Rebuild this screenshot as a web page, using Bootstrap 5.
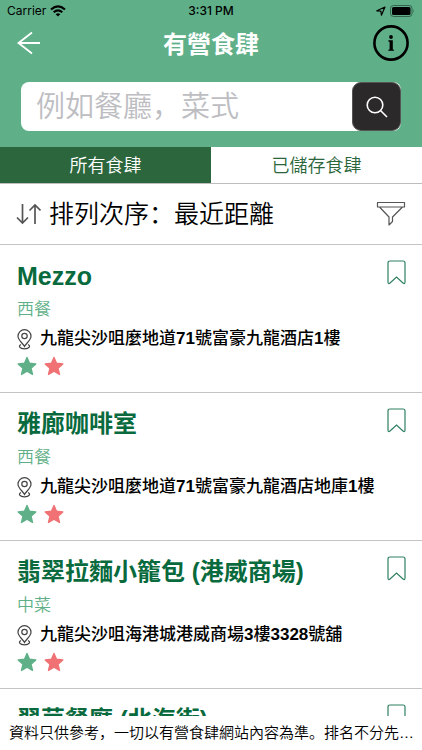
<!DOCTYPE html>
<html lang="zh">
<head>
<meta charset="utf-8">
<meta name="viewport" content="width=device-width, initial-scale=1">
<title>有營食肆</title>
<link rel="stylesheet" href="https://cdn.jsdelivr.net/npm/bootstrap@5.3.0/dist/css/bootstrap.min.css">
<style>
  body { font-family: "Liberation Sans", "Noto Sans CJK SC", sans-serif; color: #000; background: #fff; }
  svg { display: block; flex: none; }
  .top-area { background: #5fb088; }
  .status-bar { height: 22px; padding: 0 7px; font: 500 12px/22px Inter, sans-serif; }
  .status-bar > * { flex: 1 1 0; }
  .carrier { font-weight: 400; }
  .title-bar { height: 42px; padding: 0 13px; }
  .title-bar h1 { font-size: 24px; line-height: 36px; font-weight: 700; padding-top: 3px; }
  .icon-btn { padding: 0; border: 0; background: none; color: inherit; }
  .back-btn { padding: 0 4px; }
  .search-area { padding: 18px 21px 16px; }
  .search-box { height: 49px; border-radius: 8px; background: #fff; }
  .search-box input { font-size: 29px; line-height: 40px; font-weight: 350; padding: 0 0 0 15px; border: 0; background: none; min-width: 0; }
  .search-box input::placeholder { color: #bdbdc2; opacity: 1; }
  .search-btn { width: 49px; height: 49px; border: 1px solid #555; border-radius: 9px; background: #2b292a; color: #fff; }
  .tab-btn { flex: 1 1 0; height: 36px; border: 0; font-size: 18px; line-height: 36px; font-weight: 350; padding: 1px 0 0; background: #fff; color: #2c663c; }
  .tab-btn.active { background: #2c663c; color: #fff; }
  .rule-top { border-top: 1px solid #bdbdbd; }
  .sort-row { height: 61px; padding: 0 16px; }
  .sort-text { font-size: 25px; line-height: 36px; font-weight: 350; }
  .place { height: 148px; padding: 13px 16px 0 17px; border-top: 1px solid #c4c4c4; }
  .place h2 { font-size: 24px; line-height: 36px; font-weight: 700; color: #086a3d; }
  .place h2:lang(en) { font-size: 25px; }
  .cuisine { font-size: 17px; line-height: 28px; font-weight: 350; color: #5fb088; margin-top: 2px; }
  .address { font-size: 17px; line-height: 30px; font-weight: 500; gap: 8px; }
  .stars { gap: 7px; margin-top: 2px; }
  .save { color: #2f8060; margin-top: 2px; }
  .list-area { min-height: 0; }
  .note { font-size: 15px; line-height: 34px; font-weight: 350; padding: 0 9px; }
</style>
<script src="https://cdn.jsdelivr.net/npm/bootstrap@5.3.0/dist/js/bootstrap.bundle.min.js"></script>
</head>
<body class="vh-100 d-flex flex-column overflow-hidden">
<svg width="0" height="0" class="position-absolute" aria-hidden="true">
  <symbol id="bookmark" viewBox="0 0 19 25"><path d="M1 3Q1 1 3 1H16Q18 1 18 3V22Q18 24.500 16 23L9.500 17L3 23Q1 24.500 1 22Z" fill="none" stroke="currentColor" stroke-width="1.200"/></symbol>
  <symbol id="pin" viewBox="0 0 15 21"><g fill="none" stroke="#444" stroke-width="1.200"><path d="M7.500 17.500C6 14.500 1 11 1 7.200A6.500 6.500 0 0 1 14 7.200C14 11 9 14.500 7.500 17.500Z"/><circle cx="7.500" cy="7" r="2.700"/><path d="M4 15.500C1 17 2.500 19.800 7.500 19.800S14 17 11 15.500"/></g></symbol>
  <symbol id="star" viewBox="0 0 20 20"><path d="M10 1.500L12.500 7.300L18.800 7.900L14 12.100L15.500 18.400L10 15.100L4.500 18.400L6 12.100L1.200 7.900L7.500 7.300Z" fill="currentColor" stroke="currentColor" stroke-width="1.400" stroke-linejoin="round"/></symbol>
</svg>
<header class="top-area flex-shrink-0">
  <div class="status-bar d-flex align-items-center">
    <div class="carrier d-flex align-items-center gap-1">Carrier
      <svg width="16" height="12" viewBox="0 0 16 12"><g fill="none" stroke="#000" stroke-width="2.200"><path d="M1 4.500Q8-1.800 15 4.500"/><path d="M3.700 7.200Q8 3.400 12.300 7.200"/></g><path d="M5.700 9.200Q8 7.300 10.300 9.200L8 11.600Z"/></svg>
    </div>
    <div class="text-center">3:31 PM</div>
    <div class="d-flex justify-content-end align-items-center gap-1">
      <svg width="10" height="10" viewBox="0 0 10 10"><path d="M.8 4.800L9 1L5.400 9.200L4.900 5.200Z" fill="none" stroke="#000" stroke-width="1.200" stroke-linejoin="round"/></svg>
      <svg width="25" height="12" viewBox="0 0 25 12"><rect x=".5" y=".5" width="21.500" height="11" rx="3" fill="none" stroke="#35634c"/><rect x="2" y="2" width="18.500" height="8" rx="1.500"/><path d="M23.300 4Q24.700 6 23.300 8Z" fill="#35634c"/></svg>
    </div>
  </div>
  <div class="title-bar d-flex align-items-center justify-content-between text-white">
    <button class="icon-btn back-btn" type="button" aria-label="返回"><svg width="28" height="24" viewBox="0 0 28 24"><path d="M15 1.500L1.500 12L15 22.500M1.500 12H23" fill="none" stroke="#fff" stroke-width="1.800"/></svg></button>
    <h1 class="m-0">有營食肆</h1>
    <button class="icon-btn" type="button" aria-label="資訊"><svg width="36" height="36" viewBox="0 0 36 36"><circle cx="18" cy="18" r="16.600" fill="none" stroke="#000" stroke-width="2.600"/><circle cx="18" cy="12" r="1.900"/><path d="M15.300 15.300H19.800V24.300L21 25V25.800H15.200V25L16.600 24.300V17L15.300 16.300Z"/></svg></button>
  </div>
  <form class="search-area" role="search">
    <div class="search-box d-flex align-items-center">
      <input class="form-control shadow-none flex-grow-1" type="search" placeholder="例如餐廳，菜式" aria-label="搜尋食肆">
      <button class="search-btn d-flex align-items-center justify-content-center p-0 flex-shrink-0" type="button" aria-label="搜尋"><svg width="22" height="22" viewBox="0 0 22 22"><g fill="none" stroke="#fff" stroke-width="1.600"><circle cx="9" cy="9" r="7.800"/><path d="M14.500 14.500L21 21"/></g></svg></button>
    </div>
  </form>
</header>
<nav class="d-flex flex-shrink-0">
  <button class="tab-btn active" type="button">所有食肆</button>
  <button class="tab-btn" type="button">已儲存食肆</button>
</nav>
<div class="sort-row rule-top d-flex align-items-center flex-shrink-0">
  <button class="icon-btn sort-text d-flex align-items-center flex-grow-1 gap-2" type="button">
    <svg width="25" height="22" viewBox="0 0 25 22"><path d="M6.500 1V20M1 14.500L6.500 20L12 14.500M19 21V2M13.500 7.500L19 2L24.500 7.500" fill="none" stroke="#555" stroke-width="1.700"/></svg>
    排列次序：最近距離
  </button>
  <button class="icon-btn" type="button" aria-label="篩選"><svg width="30" height="26" viewBox="0 0 30 26"><path d="M1.500 1.500H28.500V6H1.500ZM3.500 6L13 16V24L16.500 20.500V16L26.500 6" fill="none" stroke="#555" stroke-width="1.200" stroke-linejoin="round"/></svg></button>
</div>
<main class="list-area flex-grow-1 overflow-hidden">
  <article class="place">
    <div class="d-flex justify-content-between align-items-start"><h2 class="m-0" lang="en">Mezzo</h2><button class="icon-btn save" type="button" aria-label="儲存 Mezzo"><svg width="19" height="25"><use href="#bookmark"/></svg></button></div>
    <div class="cuisine">西餐</div>
    <div class="address d-flex align-items-center"><svg width="15" height="21"><use href="#pin"/></svg><span>九龍尖沙咀麼地道<b>71</b>號富豪九龍酒店<b>1</b>樓</span></div>
    <div class="stars d-flex"><svg width="20" height="20" color="#5fb088"><use href="#star"/></svg><svg width="20" height="20" color="#f07274"><use href="#star"/></svg></div>
  </article>
  <article class="place">
    <div class="d-flex justify-content-between align-items-start"><h2 class="m-0">雅廊咖啡室</h2><button class="icon-btn save" type="button" aria-label="儲存 雅廊咖啡室"><svg width="19" height="25"><use href="#bookmark"/></svg></button></div>
    <div class="cuisine">西餐</div>
    <div class="address d-flex align-items-center"><svg width="15" height="21"><use href="#pin"/></svg><span>九龍尖沙咀麼地道<b>71</b>號富豪九龍酒店地庫<b>1</b>樓</span></div>
    <div class="stars d-flex"><svg width="20" height="20" color="#5fb088"><use href="#star"/></svg><svg width="20" height="20" color="#f07274"><use href="#star"/></svg></div>
  </article>
  <article class="place">
    <div class="d-flex justify-content-between align-items-start"><h2 class="m-0">翡翠拉麵小籠包 (港威商場)</h2><button class="icon-btn save" type="button" aria-label="儲存 翡翠拉麵小籠包"><svg width="19" height="25"><use href="#bookmark"/></svg></button></div>
    <div class="cuisine">中菜</div>
    <div class="address d-flex align-items-center"><svg width="15" height="21"><use href="#pin"/></svg><span>九龍尖沙咀海港城港威商場<b>3</b>樓<b>3328</b>號舖</span></div>
    <div class="stars d-flex"><svg width="20" height="20" color="#5fb088"><use href="#star"/></svg><svg width="20" height="20" color="#f07274"><use href="#star"/></svg></div>
  </article>
  <article class="place">
    <div class="d-flex justify-content-between align-items-start"><h2 class="m-0">翠華餐廳 (北海街)</h2><button class="icon-btn save" type="button" aria-label="儲存 翠華餐廳"><svg width="19" height="25"><use href="#bookmark"/></svg></button></div>
  </article>
</main>
<footer class="note flex-shrink-0 text-nowrap">資料只供參考，一切以有營食肆網站內容為準。排名不分先…</footer>
</body>
</html>
